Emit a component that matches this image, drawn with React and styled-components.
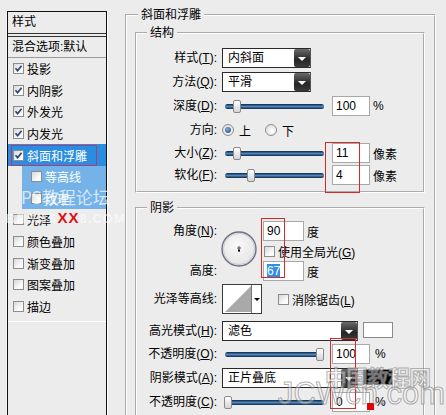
import React from 'react';
import styled, { createGlobalStyle } from 'styled-components';

const GlobalStyle = createGlobalStyle`
  *, *::before, *::after { box-sizing: border-box; }
  html, body { margin: 0; padding: 0; background: #ececec; }
  body {
    font-family: "Liberation Sans", "Noto Sans CJK SC", sans-serif;
    font-size: 12px;
    color: #000;
  }
`;

const Dialog = styled.div`
  position: relative;
  width: 446px;
  height: 415px;
  overflow: hidden;
  display: flex;
  background: #ececec;
`;

/* ---------- left style list ---------- */
const Sidebar = styled.div`
  width: 115px;
  flex: none;
  padding: 11px 0 0 7px;
`;

const List = styled.div`
  width: 100px;
  height: 420px;
  border: 1px solid #111;
  border-bottom: none;
  box-shadow: 1px 0 0 #fff, -1px 0 0 #f7f7f7;
  background: #ececec;
`;

const ListHeader = styled.div`
  height: 25px;
  line-height: 21px;
  padding-left: 4px;
  border-bottom: 4px double #333;
`;

const BlendRow = styled.div`
  height: 21px;
  line-height: 20px;
  padding-left: 4px;
  border-bottom: 1px solid #9a9a9a;
`;

const Item = styled.div`
  display: flex;
  align-items: center;
  gap: 3px;
  height: 21.6px;
  margin-left: ${p => (p.$sub ? 14 : 0)}px;
  padding-left: ${p => (p.$sub ? 9 : 5)}px;
  background: ${p => (p.$selected ? '#2b8de0' : p.$sub ? '#74b2e8' : 'transparent')};
  color: ${p => (p.$selected || p.$sub ? '#fff' : '#000')};
`;

const FocusRect = styled.span`
  display: flex;
  align-items: center;
  gap: 3px;
  margin-left: -2px;
  padding: 1px 9px 1px 1px;
  border: 1px solid #b03c74;
`;

const ListEnd = styled.div`
  margin-top: 4px;
  border-top: 1px solid #fff;
`;

const CheckBox = styled.span`
  display: inline-flex;
  align-items: center;
  justify-content: center;
  width: 11px;
  height: 11px;
  flex: none;
  border: 1px solid #8d8d8d;
  background: linear-gradient(135deg, #d8d8d8, #fbfbfb 70%);
`;

function Check({ checked }) {
  return (
    <CheckBox>
      {checked && (
        <svg width="9" height="9" viewBox="0 0 9 9">
          <path d="M1.5 4.3 L3.6 6.6 L7.6 1.8" fill="none" stroke="#2a4a74" strokeWidth="1.7" />
        </svg>
      )}
    </CheckBox>
  );
}

/* ---------- main panel ---------- */
const Main = styled.div`
  flex: 1;
  padding: 0 10px;
`;

const Group = styled.fieldset`
  margin: ${p => p.$mt || 0}px 0 0 0;
  padding: ${p => p.$pad};
  border: 2px groove #fff;
  min-width: 0;
  min-height: ${p => (p.$minH ? `${p.$minH}px` : 'auto')};
`;

const Legend = styled.legend`
  margin-left: ${p => p.$ml}px;
  padding: 0 3px;
  height: 14px;
  line-height: 14px;
`;

const FormRow = styled.div`
  display: flex;
  align-items: center;
  height: ${p => p.$h || 20}px;
  margin-top: ${p => p.$mt || 0}px;
`;

const Label = styled.div`
  width: 80px;
  flex: none;
  margin-right: 5px;
  text-align: right;
  white-space: nowrap;
  line-height: 20px;
`;

const U = styled.span`
  text-decoration: underline;
`;

const SelectBox = styled.div`
  display: flex;
  align-items: center;
  width: ${p => p.$w}px;
  height: 20px;
  flex: none;
  border: 1px solid #2a2a2a;
  border-right-color: #555;
  background: #fff;
  padding-left: 5px;
`;

const SelectText = styled.span`
  flex: 1;
  line-height: 18px;
`;

const DropButton = styled.span`
  display: flex;
  align-items: center;
  justify-content: center;
  width: 16px;
  height: 18px;
  border-radius: 2px;
  background: linear-gradient(#6a6a6a, #262626 60%, #3a3a3a);
`;

const Caret = styled.span`
  width: 0;
  height: 0;
  border-left: 4px solid transparent;
  border-right: 4px solid transparent;
  border-top: 4px solid #fff;
  margin-top: 2px;
`;

function Select({ w, children }) {
  return (
    <SelectBox $w={w}>
      <SelectText>{children}</SelectText>
      <DropButton>
        <Caret />
      </DropButton>
    </SelectBox>
  );
}

const SliderBox = styled.div`
  position: relative;
  width: 102px;
  height: 20px;
  flex: none;
  margin-right: 8px;
`;

const Track = styled.div`
  position: absolute;
  left: 3px;
  right: 0;
  top: 8px;
  height: 5px;
  border-radius: 3px;
  background: linear-gradient(#0c2440, #4f86bc 50%, #0f2a48);
`;

const Thumb = styled.div`
  position: absolute;
  top: 4px;
  width: 8px;
  height: 13px;
  margin-left: -4px;
  border: 1px solid #8a8a8a;
  border-radius: 2px;
  background: linear-gradient(#ffffff, #d4d4d4);
`;

function Slider({ value }) {
  return (
    <SliderBox>
      <Track />
      <Thumb style={{ left: `${6 + value * 92}px` }} />
    </SliderBox>
  );
}

const NumInput = styled.div`
  width: ${p => p.$w || 38}px;
  height: 20px;
  flex: none;
  border: 1px solid #a8a8a8;
  background: #fff;
  padding-left: 3px;
  line-height: 18px;
`;

const Selected = styled.span`
  background: #2f8ee6;
  color: #fff;
`;

const Unit = styled.span`
  margin-left: ${p => p.$ml || 3}px;
`;

const RadioDot = styled.span`
  display: inline-flex;
  align-items: center;
  justify-content: center;
  width: 12px;
  height: 12px;
  flex: none;
  border-radius: 50%;
  border: 1px solid #8c8c8c;
  background: radial-gradient(circle at 60% 60%, #fff, #d6d6d6);
  margin-left: ${p => p.$ml || 0}px;
  &::after {
    content: '';
    display: ${p => (p.$on ? 'block' : 'none')};
    width: 6px;
    height: 6px;
    border-radius: 50%;
    background: radial-gradient(circle at 40% 35%, #7fb0e0, #1d3f68);
  }
`;

const RadioText = styled.span`
  margin-left: 5px;
`;

const AngleBlock = styled.div`
  display: flex;
  height: 60px;
`;

const LabelCol = styled.div`
  display: flex;
  flex-direction: column;
  justify-content: space-between;
`;

const DialWrap = styled.div`
  width: 36px;
  height: 36px;
  margin-top: 10px;
  margin-left: -1px;
  flex: none;
`;

const RightCol = styled.div`
  display: flex;
  flex-direction: column;
  margin-left: 6px;
`;

const MiniRow = styled.div`
  display: flex;
  align-items: center;
  height: 20px;
  padding-left: ${p => p.$pl || 0}px;
`;

const Contour = styled.div`
  display: flex;
  width: 40px;
  height: 30px;
  flex: none;
  border: 1px solid #3c3c3c;
  background: #fff;
`;

const ContourPreview = styled.div`
  width: 29px;
  height: 28px;
  border-right: 1px solid #777;
`;

const ContourArrow = styled.div`
  flex: 1;
  display: flex;
  align-items: center;
  justify-content: center;
  &::after {
    content: '';
    border-left: 3px solid transparent;
    border-right: 3px solid transparent;
    border-top: 3px solid #000;
  }
`;

const CheckLabel = styled.div`
  display: flex;
  align-items: center;
  gap: 3px;
  margin-left: ${p => p.$ml || 0}px;
`;

const Swatch = styled.div`
  width: 30px;
  height: 16px;
  margin-left: 5px;
  align-self: flex-start;
  margin-top: 1px;
  border: 1px solid #8a8a8a;
  background: ${p => p.$color};
`;

/* ---------- overlays ---------- */
const RedMark = styled.div`
  position: absolute;
  left: ${p => p.$x}px;
  top: ${p => p.$y}px;
  width: ${p => p.$w}px;
  height: ${p => p.$h}px;
  border: 1px solid #d42a2a;
  pointer-events: none;
`;

const RedDot = styled.div`
  position: absolute;
  left: 367px;
  top: 403px;
  width: 7px;
  height: 7px;
  background: #e00000;
`;

const WatermarkTitle = styled.div`
  position: absolute;
  left: 21px;
  top: 184px;
  font-family: "Noto Sans CJK SC", sans-serif;
  font-size: 17px;
  color: rgba(255, 255, 255, 0.72);
  white-space: nowrap;
  pointer-events: none;
`;

const WatermarkUrl = styled.div`
  position: absolute;
  left: 6px;
  top: 209px;
  font-family: "Liberation Sans", sans-serif;
  font-weight: bold;
  font-size: 13px;
  letter-spacing: 1px;
  color: rgba(255, 255, 255, 0.55);
  white-space: nowrap;
  pointer-events: none;
`;

const RedText = styled.span`
  color: #e01010;
  font-size: 15px;
`;

const WatermarkCn = styled.div`
  position: absolute;
  left: 325px;
  top: 360px;
  font-family: "Noto Sans CJK SC", sans-serif;
  font-weight: bold;
  font-size: 22px;
  letter-spacing: -1px;
  color: rgba(240, 240, 240, 0.5);
  -webkit-text-stroke: 1px rgba(110, 110, 110, 0.5);
  white-space: nowrap;
  pointer-events: none;
`;

const WatermarkEn = styled.div`
  position: absolute;
  left: 278px;
  top: 376px;
  font-family: "Liberation Sans", sans-serif;
  font-size: 31px;
  color: rgba(255, 255, 255, 0.35);
  -webkit-text-stroke: 1px rgba(110, 110, 110, 0.55);
  white-space: nowrap;
  pointer-events: none;
`;

const styles = [
  { name: '投影', checked: true },
  { name: '内阴影', checked: true },
  { name: '外发光', checked: true },
  { name: '内发光', checked: true },
  { name: '斜面和浮雕', checked: true, selected: true },
  { name: '等高线', sub: true },
  { name: '纹理', sub: true },
  { name: '光泽' },
  { name: '颜色叠加' },
  { name: '渐变叠加' },
  { name: '图案叠加' },
  { name: '描边' },
];

function Dial() {
  return (
    <DialWrap>
      <svg width="36" height="36" viewBox="0 0 36 36">
        <defs>
          <radialGradient id="dialFace" cx="45%" cy="40%" r="60%">
            <stop offset="0%" stopColor="#fafafa" />
            <stop offset="100%" stopColor="#e4e4e4" />
          </radialGradient>
        </defs>
        <circle cx="18" cy="18" r="17" fill="url(#dialFace)" stroke="#6e7280" strokeWidth="1.4" />
        <circle cx="18" cy="18" r="15.6" fill="none" stroke="#c9ccd4" strokeWidth="1" />
        <path d="M18 15 V19 M16 17 H20" stroke="#333" strokeWidth="0.8" />
        <rect x="17" y="18.6" width="2" height="2" fill="#000" />
      </svg>
    </DialWrap>
  );
}

export default function App() {
  return (
    <>
      <GlobalStyle />
      <Dialog>
        <Sidebar>
          <List>
            <ListHeader>样式</ListHeader>
            <BlendRow>混合选项:默认</BlendRow>
            {styles.map(s => (
              <Item key={s.name} $sub={s.sub} $selected={s.selected}>
                {s.selected ? (
                  <FocusRect>
                    <Check checked={s.checked} />
                    {s.name}
                  </FocusRect>
                ) : (
                  <>
                    <Check checked={s.checked} />
                    {s.name}
                  </>
                )}
              </Item>
            ))}
            <ListEnd />
          </List>
        </Sidebar>

        <Main>
          <Group $mt={8} $pad="4px 9px 0 8px" $minH={420}>
            <Legend $ml={3}>斜面和浮雕</Legend>

            <Group $pad="8px 0 6px 0">
              <Legend $ml={10}>结构</Legend>
              <FormRow>
                <Label>样式(<U>T</U>):</Label>
                <Select w={89}>内斜面</Select>
              </FormRow>
              <FormRow $mt={4}>
                <Label>方法(<U>Q</U>):</Label>
                <Select w={89}>平滑</Select>
              </FormRow>
              <FormRow $mt={4}>
                <Label>深度(<U>D</U>):</Label>
                <Slider value={0.1} />
                <NumInput>100</NumInput>
                <Unit>%</Unit>
              </FormRow>
              <FormRow $mt={4}>
                <Label>方向:</Label>
                <RadioDot $on />
                <RadioText>上</RadioText>
                <RadioDot $ml={14} />
                <RadioText>下</RadioText>
              </FormRow>
              <FormRow $mt={3}>
                <Label>大小(<U>Z</U>):</Label>
                <Slider value={0.1} />
                <NumInput>11</NumInput>
                <Unit>像素</Unit>
              </FormRow>
              <FormRow $mt={2}>
                <Label>软化(<U>F</U>):</Label>
                <Slider value={0.25} />
                <NumInput>4</NumInput>
                <Unit>像素</Unit>
              </FormRow>
            </Group>

            <Group $mt={8} $pad="6px 0 40px 0">
              <Legend $ml={10}>阴影</Legend>
              <AngleBlock>
                <LabelCol>
                  <Label>角度(<U>N</U>):</Label>
                  <Label>高度:</Label>
                </LabelCol>
                <Dial />
                <RightCol>
                  <MiniRow>
                    <NumInput $w={41}>90</NumInput>
                    <Unit>度</Unit>
                  </MiniRow>
                  <MiniRow $pl={1}>
                    <CheckLabel>
                      <Check />
                      <span>
                        使用全局光(<U>G</U>)
                      </span>
                    </CheckLabel>
                  </MiniRow>
                  <MiniRow>
                    <NumInput $w={41}>
                      <Selected>67</Selected>
                    </NumInput>
                    <Unit>度</Unit>
                  </MiniRow>
                </RightCol>
              </AngleBlock>

              <FormRow $h={30} $mt={3}>
                <Label>光泽等高线:</Label>
                <Contour>
                  <ContourPreview>
                    <svg width="29" height="28" viewBox="0 0 29 28">
                      <polygon points="2,27 28,1 28,27" fill="#a9a9a9" />
                    </svg>
                  </ContourPreview>
                  <ContourArrow />
                </Contour>
                <CheckLabel $ml={16}>
                  <Check />
                  <span>
                    消除锯齿(<U>L</U>)
                  </span>
                </CheckLabel>
              </FormRow>

              <FormRow $mt={7}>
                <Label>高光模式(<U>H</U>):</Label>
                <Select w={136}>滤色</Select>
                <Swatch $color="#fff" />
              </FormRow>
              <FormRow $mt={3}>
                <Label>不透明度(<U>O</U>):</Label>
                <Slider value={1} />
                <NumInput>100</NumInput>
                <Unit $ml={5}>%</Unit>
              </FormRow>
              <FormRow $mt={4}>
                <Label>阴影模式(<U>A</U>):</Label>
                <Select w={136}>正片叠底</Select>
                <Swatch $color="#000" />
              </FormRow>
              <FormRow $mt={4}>
                <Label>不透明度(<U>C</U>):</Label>
                <Slider value={0} />
                <NumInput>0</NumInput>
                <Unit $ml={5}>%</Unit>
              </FormRow>
            </Group>
          </Group>
        </Main>

        <RedMark $x={325} $y={142} $w={35} $h={51} />
        <RedMark $x={261} $y={218} $w={24} $h={60} />
        <RedMark $x={330} $y={338} $w={26} $h={71} />
        <RedDot />

        <WatermarkTitle>PS教程论坛</WatermarkTitle>
        <WatermarkUrl>
          BBS.16<RedText>XX</RedText>8.COM
        </WatermarkUrl>
        <WatermarkCn>中国教程网</WatermarkCn>
        <WatermarkEn>JCWcn.com</WatermarkEn>
      </Dialog>
    </>
  );
}
